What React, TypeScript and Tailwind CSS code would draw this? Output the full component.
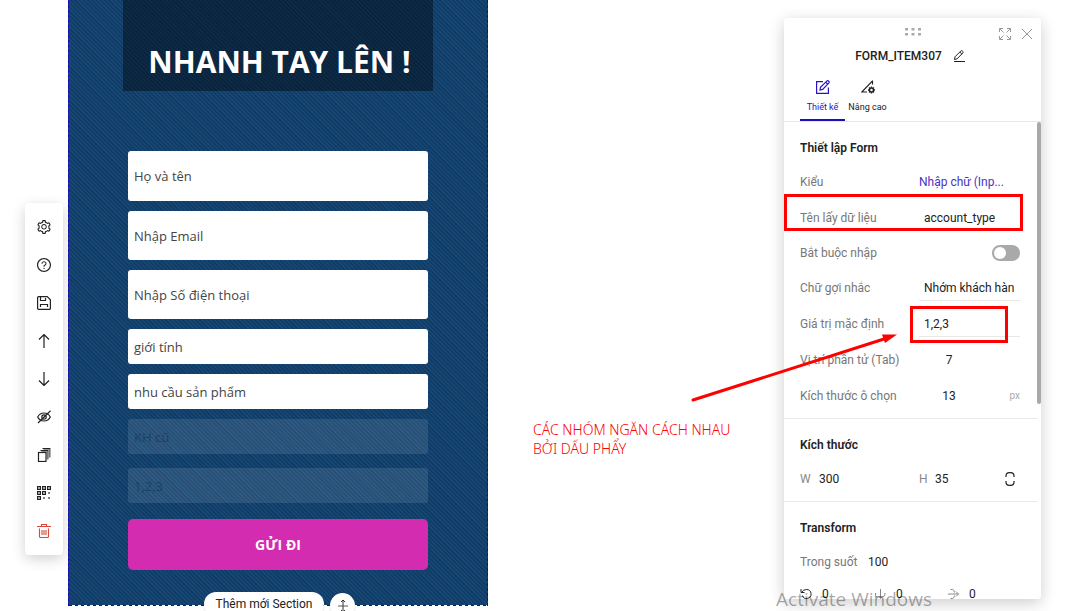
import type { ReactNode } from "react"
import { AiOutlineQuestionCircle, AiOutlineSetting } from "react-icons/ai"

const stroke = {
  fill: "none",
  stroke: "currentColor",
  strokeWidth: 1,
}

const SaveIcon = () => (
  <svg width={14} height={14} viewBox="0 0 14 14" {...stroke} strokeWidth={1.2}>
    <path d="M1.6.6h8.6l3.2 3.2v8.6a1 1 0 0 1-1 1H1.6a1 1 0 0 1-1-1V1.6a1 1 0 0 1 1-1z" />
    <path d="M3.5.8v3.7h5V2M3.5 11V8.5h7V11" />
  </svg>
)

const ArrowUpIcon = () => (
  <svg width={12} height={14} viewBox="0 0 12 14" {...stroke}>
    <path d="M6 14V1M1 5.5l5-5 5 5" strokeWidth={1.2} />
  </svg>
)

const ArrowDownIcon = () => (
  <svg width={12} height={14} viewBox="0 0 12 14" {...stroke}>
    <path d="M6 0v13M1 8.5l5 5 5-5" strokeWidth={1.2} />
  </svg>
)

const HiddenIcon = () => (
  <svg width={14} height={14} viewBox="0 0 14 14" {...stroke} strokeWidth={1.2}>
    <path d="M.7 7C2 4.400 4.300 3 7 3s5 1.400 6.300 4C12 9.600 9.700 11 7 11S2 9.600.7 7z" />
    <circle cx={7} cy={7} r={2.2} />
    <path d="M1 13 13.500.8" />
  </svg>
)

const CopyIcon = () => (
  <svg width={14} height={14} viewBox="0 0 14 14" {...stroke}>
    <path d="M4.500 2.900h6.200v8.500M6.500.9h6.200v8.500" stroke="#777" strokeWidth={1.800} />
    <path d="M3.500 2.500h7.500M5.500.5H13" />
    <rect x={1.500} y={4.500} width={7.500} height={9} fill="#fff" strokeWidth={1.200} />
  </svg>
)

const QrIcon = () => (
  <svg width={14} height={14} viewBox="0 0 14 14" {...stroke} strokeWidth={1.2}>
    <path d="M.6.6h2.800v2.800H.6zM5.600.6h2.800v2.800H5.600zM10.600.6h2.800v2.800h-2.800zM.6 5.600h2.800v2.800H.6zM5.600 5.600h2.800v2.800H5.600zM.6 10.600h2.800v2.800H.6z" />
    <path d="M11.300 7h1.500M6.300 12h1.500M11.300 12h1.500" strokeWidth={1.500} />
  </svg>
)

const TrashIcon = () => (
  <svg width={14} height={14} viewBox="0 0 14 14" {...stroke} strokeWidth={1.1}>
    <path d="M0 2.500h14M4.500 2.500v-2h5v2M2.500 4.500v8q0 1 1 1h7q1 0 1-1v-8M5 6v5M7 6v5M9 6v5" />
  </svg>
)

const PencilLineIcon = () => (
  <svg width={12} height={12} viewBox="0 0 12 12" {...stroke}>
    <path d="M1 11.500h11M1.500 9.500 2 6.800 7.800 1q.8-.7 1.600 0l.4.4q.7.8 0 1.600L4 8.900zM6.800 2l2 2" />
  </svg>
)

const DesignIcon = () => (
  <svg width={14} height={14} viewBox="0 0 14 14" {...stroke} strokeWidth={1.2}>
    <path d="M7 1.600H.6v11.800h11.800V7.500" />
    <path d="m4 10 .5-2.800L11 .9q.7-.6 1.300 0l.6.6q.6.6 0 1.300L6.700 9.400zM9.700 2.200l1.900 1.900" />
  </svg>
)

const AdvancedIcon = () => (
  <svg width={14} height={14} viewBox="0 0 14 14" {...stroke} strokeWidth={1.2}>
    <path d="M11.500.5v4M11.500.8.8 12H6" />
    <circle cx={10.500} cy={10} r={2} strokeWidth={1.500} />
    <path d="M10.500 6.500v1.500M10.500 12v1.500M7 10h1.500M12.500 10H14M8 7.500l1 1M12 11.500l1 1M13 7.500l-1 1M9 11.500l-1 1" strokeWidth={1.300} />
  </svg>
)

const ExpandIcon = () => (
  <svg width={12} height={12} viewBox="0 0 12 12" {...stroke}>
    <path d="M.5 4V.5H4M8 .5h3.500V4M11.500 8v3.500H8M4 11.500H.5V8M1 1l3.500 3.500M11 1 7.500 4.500M11 11 7.500 7.500M1 11l3.500-3.500" />
  </svg>
)

const CloseIcon = () => (
  <svg width={12} height={12} viewBox="0 0 12 12" {...stroke}>
    <path d="m1 1 10 10M11 1 1 11" />
  </svg>
)

const RatioIcon = () => (
  <svg width={10} height={14} viewBox="0 0 10 14" {...stroke} strokeWidth={1.2}>
    <path d="M1 5V4q0-3.300 3.300-3.300h1.400Q9 .7 9 4v1M1 9v1q0 3.300 3.300 3.300h1.400Q9 13.300 9 10V9" />
  </svg>
)

const RotateIcon = () => (
  <svg width={12} height={12} viewBox="0 0 12 12" {...stroke}>
    <path d="M1 1v3.500h3.500M1.500 4.500Q3 1.500 6.500 1.500a4.500 4.500 0 1 1-4.200 6" />
  </svg>
)

const FlipXIcon = () => (
  <svg width={12} height={12} viewBox="0 0 12 12" {...stroke} className="text-[#888]">
    <path d="M6.500 1v9M1.500 5v2.500q0 1.500 2.500 1.500M11 5q.5 3.500-2.500 4M4.500 8l2 2.500 2-2.500" />
  </svg>
)

const FlipYIcon = () => (
  <svg width={12} height={12} viewBox="0 0 12 12" {...stroke} className="text-[#888]">
    <path d="M0 6h10.500M8 3.500 10.500 6 8 8.500M2.500 1.500h2q2 .5 2 3M2.500 10.500h2q2-.5 2-3" />
  </svg>
)

const ResizeIcon = () => (
  <svg width={12} height={14} viewBox="0 0 12 14" {...stroke}>
    <path d="M1 7h10" stroke="#888" strokeWidth={1.400} />
    <path d="M6 1.500v11M4 3l2-2 2 2M4 11l2 2 2-2" />
  </svg>
)

const tools = [
  { label: "Cài đặt", icon: <AiOutlineSetting size={16} /> },
  { label: "Trợ giúp", icon: <AiOutlineQuestionCircle size={16} /> },
  { label: "Lưu", icon: <SaveIcon /> },
  { label: "Lên", icon: <ArrowUpIcon /> },
  { label: "Xuống", icon: <ArrowDownIcon /> },
  { label: "Ẩn", icon: <HiddenIcon /> },
  { label: "Nhân bản", icon: <CopyIcon /> },
  { label: "Mã QR", icon: <QrIcon /> },
  { label: "Xoá", icon: <TrashIcon />, danger: true },
]

const Toolbar = () => (
  <aside className="w-[68px] shrink-0 pt-[203px] pl-[25px]">
    <div className="flex w-[38px] flex-col rounded-sm bg-white py-[5px] shadow-[0_4px_14px_rgba(0,0,0,0.18)]">
      {tools.map((tool) => (
        <button
          key={tool.label}
          aria-label={tool.label}
          className={`flex h-[38px] items-center justify-center ${tool.danger ? "text-[#d9483b]" : "text-[#222]"}`}
        >
          {tool.icon}
        </button>
      ))}
    </div>
  </aside>
)

const textInput =
  "block w-full rounded-[3px] bg-white pl-[6px] text-[13px] text-[#444] placeholder:text-[#444] placeholder:opacity-100"

const Canvas = () => (
  <main className="relative flex h-[606px] w-[420px] shrink-0 flex-col border-x border-dashed border-[#1d00c8] bg-[#154270] bg-[repeating-linear-gradient(45deg,#113b63_0px,#113b63_1px,#164877_2px,#164877_3px)] font-['Open_Sans','Noto_Sans',sans-serif]">
    <div className="ml-[54px] h-[91px] w-[310px] bg-black/40 pt-[42px] pl-[3px]">
      <h1 className="text-center text-[30px] leading-10 font-bold whitespace-nowrap text-white">NHANH TAY LÊN !</h1>
    </div>
    <form className="mt-[60px] ml-[59px] flex w-[300px] flex-col gap-[10px]">
      <input aria-label="Họ và tên" placeholder="Họ và tên" className={`${textInput} h-[50px]`} />
      <input aria-label="Email" placeholder="Nhập Email" className={`${textInput} h-[49px]`} />
      <input aria-label="Số điện thoại" placeholder="Nhập Số điện thoại" className={`${textInput} h-[49px]`} />
      <input aria-label="Giới tính" placeholder="giới tính" className={`${textInput} h-[35px]`} />
      <input aria-label="Nhu cầu" placeholder="nhu cầu sản phẩm" className={`${textInput} h-[35px]`} />
      <input aria-label="Nhóm khách hàng" placeholder="KH cũ" className={`${textInput} h-[35px] opacity-10`} />
      <input aria-label="Loại tài khoản" defaultValue="1,2,3" className={`${textInput} mt-1 h-[35px] opacity-10`} />
      <button type="button" className="mt-[6px] h-[51px] rounded-[5px] bg-[#d42cb0] text-sm font-bold text-white">
        GỬI ĐI
      </button>
    </form>
    <div className="mt-auto h-px bg-[repeating-linear-gradient(90deg,#1d00c8_0px,#1d00c8_3px,#fff_3px,#fff_6px)]" />
    <div className="absolute top-[592px] left-[135px] flex gap-[6px] font-[Roboto,sans-serif]">
      <button className="h-6 w-[120px] rounded-full bg-white text-xs text-[#222] shadow">Thêm mới Section</button>
      <button aria-label="Đổi chiều cao" className="mt-px flex size-[25px] items-center justify-center rounded-full bg-white text-[#333] shadow">
        <ResizeIcon />
      </button>
    </div>
  </main>
)

const Row = ({ id, label, className = "h-9", children }: { id: string; label: string; className?: string; children: ReactNode }) => (
  <div className={`relative flex items-center ${className}`}>
    <label htmlFor={id} className="w-[119px] shrink-0 text-[#777]">
      {label}
    </label>
    {children}
  </div>
)

const Section = ({ title, children }: { title: string; children: ReactNode }) => (
  <section className="border-b border-[#e8e8e8] pt-[17px] pr-[17px] pb-1 pl-4">
    <h2 className="mb-[7px] text-xs leading-[18px] font-semibold">{title}</h2>
    {children}
  </section>
)

const lineInput = "w-full min-w-0 border-b border-[#e8e8e8] bg-transparent pt-[5px] pb-1 pl-[5px]"

const Panel = () => (
  <aside className="relative mr-[31px] flex w-[257px] shrink-0 flex-col pt-[18px] pb-3 font-[Roboto,sans-serif] text-xs text-[#222]">
    <div className="flex min-h-0 flex-1 flex-col overflow-hidden rounded-[3px] bg-white shadow-[0_4px_16px_rgba(0,0,0,0.2)]">
      <header className="border-b border-[#e8e8e8]">
        <div className="flex h-7 items-center pr-[8px] text-[#999]">
          <svg width={16} height={8} viewBox="0 0 16 8" fill="#aaa" className="ml-[121px]">
            <path d="M0 0h3v2.500H0zM6.500 0h3v2.500h-3zM13 0h3v2.500h-3zM0 5h3v2.500H0zM6.500 5h3v2.500h-3zM13 5h3v2.500h-3z" />
          </svg>
          <button aria-label="Phóng to" className="mt-[3px] ml-auto">
            <ExpandIcon />
          </button>
          <button aria-label="Đóng" className="mt-[3px] ml-[10px]">
            <CloseIcon />
          </button>
        </div>
        <div className="flex h-5 items-center justify-center gap-[11px] pr-[5px]">
          <span className="font-medium">FORM_ITEM307</span>
          <button aria-label="Đổi tên">
            <PencilLineIcon />
          </button>
        </div>
        <nav className="flex h-[55px] pl-4 text-[9px]">
          <button className="flex w-[45px] flex-col items-center gap-[7px] border-b-2 border-[#1d0fb8] pt-[14px] text-[#2a14c4]">
            <DesignIcon />
            Thiết kế
          </button>
          <button className="flex w-[45px] flex-col items-center gap-[7px] pt-[14px] whitespace-nowrap">
            <AdvancedIcon />
            Nâng cao
          </button>
        </nav>
      </header>
      <div className="flex min-h-0 flex-1 overflow-hidden">
        <div className="min-w-0 flex-1">
          <Section title="Thiết lập Form">
            <Row id="kind" label="Kiểu">
              <select id="kind" className="w-full appearance-none bg-transparent text-[#4a32c8]">
                <option>Nhập chữ (Inp...</option>
              </select>
            </Row>
            <Row id="field" label="Tên lấy dữ liệu">
              <input id="field" defaultValue="account_type" className="w-full min-w-0 pl-[5px]" />
              <div className="pointer-events-none absolute -top-[6px] -right-[3px] h-[37px] w-[239px] border-3 border-[#fe0000]" />
            </Row>
            <Row id="required" label="Bắt buộc nhập" className="h-[34px]">
              <input
                id="required"
                type="checkbox"
                className="ml-auto flex h-4 w-7 appearance-none items-center rounded-full bg-[#a9a9a9] before:ml-[2px] before:size-3 before:rounded-full before:bg-white checked:justify-end"
              />
            </Row>
            <Row id="hint" label="Chữ gợi nhắc">
              <input id="hint" defaultValue="Nhớm khách hàn" className={lineInput} />
            </Row>
            <Row id="value" label="Giá trị mặc định">
              <input id="value" defaultValue="1,2,3" className={lineInput} />
              <div className="pointer-events-none absolute top-0 right-3 h-[37px] w-[98px] border-3 border-[#fe0000]" />
            </Row>
            <Row id="tab" label="Vị trí phần tử (Tab)">
              <input id="tab" defaultValue="7" className="w-[60px] text-center" />
            </Row>
            <Row id="size" label="Kích thước ô chọn">
              <input id="size" defaultValue="13" className="w-[60px] text-center" />
              <span className="ml-auto text-[10px] text-[#aaa]">px</span>
            </Row>
          </Section>
          <Section title="Kích thước">
            <div className="flex h-9 items-center">
              <label htmlFor="w" className="w-[19px] text-[#888]">W</label>
              <input id="w" defaultValue="300" className="w-[100px]" />
              <label htmlFor="h" className="w-[16px] text-[#888]">H</label>
              <input id="h" defaultValue="35" className="w-[50px]" />
              <button aria-label="Giữ tỉ lệ" className="mr-[5px] ml-auto">
                <RatioIcon />
              </button>
            </div>
          </Section>
          <Section title="Transform">
            <div className="flex h-9 items-center">
              <label htmlFor="opacity" className="w-[68px] text-[#777]">Trong suốt</label>
              <input id="opacity" defaultValue="100" className="w-20" />
            </div>
            <div className="flex h-7 items-center">
              <RotateIcon />
              <input aria-label="Xoay" defaultValue="0" className="ml-[10px] w-[52px]" />
              <FlipXIcon />
              <input aria-label="Nghiêng ngang" defaultValue="0" className="ml-[10px] w-[52px]" />
              <FlipYIcon />
              <input aria-label="Nghiêng dọc" defaultValue="0" className="ml-[9px] w-[30px]" />
            </div>
          </Section>
        </div>
        <div className="h-[282px] w-1 rounded-full bg-[#a9a9a9]" />
      </div>
    </div>
    <svg width={210} height={72} viewBox="0 0 210 72" className="pointer-events-none absolute top-[331px] -left-[94px]">
      <path d="M3 69 194 8" stroke="#fe0000" strokeWidth={3} strokeLinecap="round" />
      <path d="M207 3.500 195 12 192 3.500z" fill="#fe0000" />
    </svg>
  </aside>
)

export default function App() {
  return (
    <div className="relative flex h-screen overflow-hidden bg-white">
      <Toolbar />
      <Canvas />
      <div className="min-w-0 flex-1 pt-[420px] pl-[45px]">
        <p className="w-[220px] font-['Noto_Sans',sans-serif] text-sm leading-[19px] font-light text-[#fe0000]">
          CÁC NHÓM NGĂN CÁCH NHAU
          <br />
          BỞI DẤU PHẨY
        </p>
      </div>
      <Panel />
      <p className="pointer-events-none absolute right-[140px] -bottom-[2px] font-['Open_Sans',sans-serif] text-[19px] leading-7 text-black/35">
        Activate Windows
      </p>
    </div>
  )
}
